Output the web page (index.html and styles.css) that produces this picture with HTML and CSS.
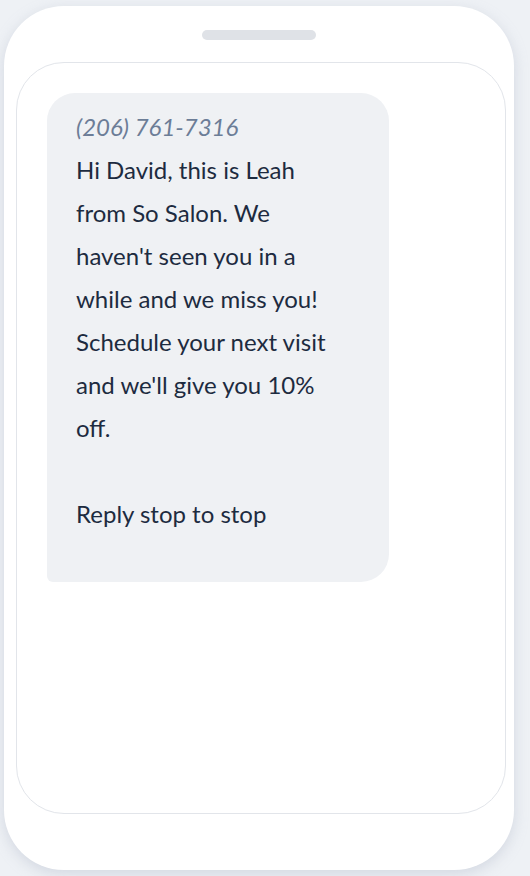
FILE: index.html
```html
<!DOCTYPE html>
<html lang="en">
<head>
    <meta charset="UTF-8">
    <meta name="viewport" content="width=device-width, initial-scale=1.0">
    <title>Message Preview</title>
    <link rel="stylesheet" href="styles.css">
</head>
<body>
    <div class="phone">
        <div class="notch"></div>
        <div class="screen">
            <div class="bubble">
                <p class="sender">(206) 761-7316</p>
                <p class="message">Hi David, this is Leah from So Salon. We haven't seen you in a while and we miss you! Schedule your next visit and we'll give you 10% off.<br><br>Reply stop to stop</p>
            </div>
        </div>
    </div>
</body>
</html>
```

FILE: styles.css
```css
body {
    margin: 0;
    padding: 6px 16px 6px 4px;
    background-color: #eef1f5;
    font-family: Lato, "Open Sans", sans-serif;
}

.phone {
    width: 510px;
    height: 864px;
    box-sizing: border-box;
    background-color: #fff;
    border-radius: 60px;
    box-shadow: 0 4px 14px rgba(160, 170, 190, 0.35);
    padding: 24px 8px 56px 12px;
    display: flex;
    flex-direction: column;
}

.notch {
    width: 114px;
    height: 10px;
    border-radius: 5px;
    background-color: #dfe2e7;
    margin: 0 auto 22px 186px;
}

.screen {
    flex: 1;
    border: 1.5px solid #e2e5ea;
    border-radius: 48px;
    padding: 30px;
}

.bubble {
    width: 342px;
    height: 489px;
    box-sizing: border-box;
    background-color: #eff1f4;
    border-radius: 28px 28px 28px 6px;
    padding: 17px 29px;
}

.sender {
    margin: 0 0 4px;
    font-style: italic;
    font-size: 24px;
    line-height: 34px;
    color: #6c7d97;
}

.message {
    margin: 0;
    max-width: 264px;
    font-size: 24px;
    line-height: 43px;
    color: #1d2b40;
}
```
